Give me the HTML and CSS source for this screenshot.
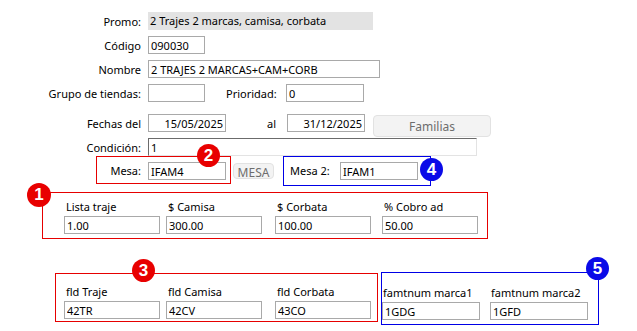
FILE: index.html
```html
<!DOCTYPE html>
<html lang="es">
<head>
    <meta charset="UTF-8">
    <title>Promo</title>
    <link rel="stylesheet" href="styles.css">
</head>
<body>
    <div class="form">
        <div class="row">
            <label class="lbl">Promo:</label>
            <div class="readonly">2 Trajes 2 marcas, camisa, corbata</div>
        </div>
        <div class="row">
            <label class="lbl">Código</label>
            <input class="fld w-code" type="text" value="090030">
        </div>
        <div class="row">
            <label class="lbl">Nombre</label>
            <input class="fld w-name" type="text" value="2 TRAJES 2 MARCAS+CAM+CORB">
        </div>
        <div class="row">
            <label class="lbl">Grupo de tiendas:</label>
            <input class="fld w-code" type="text" value="">
            <label class="lbl-prio">Prioridad:</label>
            <input class="fld w-mid" type="text" value="0">
        </div>
        <div class="row row-dates">
            <label class="lbl">Fechas del</label>
            <input class="fld w-mid right" type="text" value="15/05/2025">
            <label class="lbl-al">al</label>
            <input class="fld w-mid right" type="text" value="31/12/2025">
            <button class="btn btn-fam" type="button">Familias</button>
        </div>
        <div class="row row-cond">
            <label class="lbl">Condición:</label>
            <input class="fld inset w-cond" type="text" value="1">
        </div>

        <div class="mesa-row">
            <div class="box red mesa">
                <label class="lbl-mesa">Mesa:</label>
                <input class="fld w-mid" type="text" value="IFAM4">
                <span class="badge badge-red b2">2</span>
            </div>
            <button class="btn btn-mesa" type="button">MESA</button>
            <div class="box blue mesa2">
                <label class="lbl-mesa2">Mesa 2:</label>
                <input class="fld w-mid" type="text" value="IFAM1">
                <span class="badge badge-blue b4">4</span>
            </div>
        </div>

        <div class="box red prices">
            <span class="badge badge-red b1">1</span>
            <div class="cell">
                <label>Lista traje</label>
                <input class="fld" type="text" value="1.00">
            </div>
            <div class="cell">
                <label>$ Camisa</label>
                <input class="fld" type="text" value="300.00">
            </div>
            <div class="cell">
                <label>$ Corbata</label>
                <input class="fld" type="text" value="100.00">
            </div>
            <div class="cell">
                <label>% Cobro ad</label>
                <input class="fld" type="text" value="50.00">
            </div>
        </div>

        <div class="bottom-row">
            <div class="box red fld-box">
                <span class="badge badge-red b3">3</span>
                <div class="cell">
                    <label>fld Traje</label>
                    <input class="fld" type="text" value="42TR">
                </div>
                <div class="cell">
                    <label>fld Camisa</label>
                    <input class="fld" type="text" value="42CV">
                </div>
                <div class="cell">
                    <label>fld Corbata</label>
                    <input class="fld" type="text" value="43CO">
                </div>
            </div>
            <div class="box blue fams">
                <span class="badge badge-blue b5">5</span>
                <div class="cell">
                    <label>famtnum marca1</label>
                    <input class="fld" type="text" value="1GDG">
                </div>
                <div class="cell">
                    <label>famtnum marca2</label>
                    <input class="fld" type="text" value="1GFD">
                </div>
            </div>
        </div>
    </div>
</body>
</html>
```

FILE: styles.css
```css
body {
    margin: 0;
    background: #fff;
    font-family: "Segoe UI", "Noto Sans", sans-serif;
    font-size: 11px;
    color: #000;
}
.form {
    padding-top: 12px;
}
.row {
    display: flex;
    align-items: center;
    height: 18px;
    margin-bottom: 6px;
}
.row-dates {
    margin-top: 12px;
}
.row-cond {
    margin-bottom: 0;
}
.lbl {
    width: 141px;
    margin-right: 7px;
    text-align: right;
    white-space: nowrap;
}
.lbl-prio {
    margin-left: 21px;
    width: 60px;
}
.lbl-al {
    margin-left: 41px;
    width: 20px;
}
.readonly {
    width: 225px;
    height: 18px;
    line-height: 18px;
    padding-left: 2px;
    box-sizing: border-box;
    background: #e3e3e3;
    white-space: nowrap;
}
.fld {
    height: 18px;
    box-sizing: border-box;
    border: 1px solid #a9a9a9;
    padding: 0 2px;
    margin: 0;
    font-family: inherit;
    font-size: 11px;
    color: #000;
    background: #fff;
    outline: none;
}
.right {
    text-align: right;
}
.inset {
    border-top-color: #6b6b6b;
    border-left-color: #6b6b6b;
    border-right-color: #e3e3e3;
    border-bottom-color: #e3e3e3;
}
.w-code { width: 57px; }
.w-name { width: 232px; }
.w-mid { width: 78px; }
.w-cond { width: 329px; }

.btn {
    font-family: inherit;
    font-size: 12px;
    color: #6d6d6d;
    background: #f3f3f3;
    border: 1px solid #e2e2e2;
    border-radius: 4px;
    padding: 0;
}
.btn-fam {
    width: 118px;
    height: 22px;
    margin-left: 8px;
    align-self: flex-start;
    margin-top: 1px;
    margin-bottom: -5px;
}

/* numbered boxes */
.box {
    position: relative;
    box-sizing: border-box;
    border: 1px solid #e60000;
}
.box.blue { border-color: #0000e6; }
.badge {
    position: absolute;
    width: 23px;
    height: 23px;
    border-radius: 50%;
    color: #fff;
    font-family: "Liberation Sans", Arial, sans-serif;
    font-weight: bold;
    font-size: 17px;
    line-height: 23px;
    text-align: center;
}
.badge-red { background: #e80000; }
.badge-blue { background: #0a0ae8; }

.mesa-row {
    display: flex;
    align-items: flex-start;
}
.mesa {
    display: flex;
    align-items: flex-start;
    margin-left: 96px;
    width: 135px;
    height: 28px;
    padding-top: 5px;
}
.lbl-mesa {
    width: 44px;
    margin-right: 7px;
    text-align: right;
    line-height: 18px;
}
.btn-mesa {
    width: 41px;
    height: 16px;
    margin: 7px 0 0 2px;
}
.mesa2 {
    display: flex;
    align-items: flex-start;
    margin-left: 9px;
    width: 148px;
    height: 30px;
    padding: 5px 0 0 6px;
}
.lbl-mesa2 {
    width: 50px;
    line-height: 18px;
}
.b2 { left: 100px; top: -13px; }
.b4 { left: 136px; top: 1px; }

.prices {
    display: grid;
    grid-template-columns: 102px 109px 107px 96px;
    margin: 6px 0 0 42px;
    width: 446px;
    height: 47px;
    padding: 6px 0 0 21px;
}
.cell {
    display: flex;
    flex-direction: column;
}
.cell label {
    line-height: 15px;
    padding-left: 2px;
    margin-bottom: 2px;
    white-space: nowrap;
}
.cell .fld {
    width: 96px;
}
.b1 { left: -16px; top: -10px; width: 24px; height: 24px; line-height: 24px; }

.bottom-row {
    display: flex;
    align-items: flex-start;
    margin: 34px 0 0 55px;
}
.fld-box {
    display: grid;
    grid-template-columns: 102px 109px 96px;
    width: 323px;
    height: 49px;
    padding: 10px 0 0 8px;
}
.fams {
    display: grid;
    grid-template-columns: 108px 99px;
    margin: -1px 0 0 3px;
    width: 218px;
    height: 53px;
    padding: 12px 0 0 0;
}
.fams .fld {
    width: 98px;
}
.fams .cell label {
    padding-left: 1px;
}
.b3 { left: 76px; top: -15px; }
.b5 { left: 204px; top: -16px; }
```
